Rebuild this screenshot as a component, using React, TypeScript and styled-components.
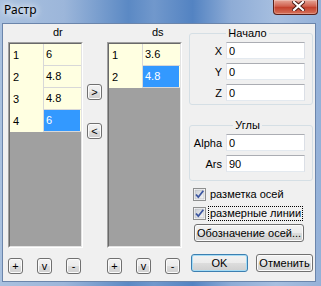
import styled, { createGlobalStyle } from "styled-components";

const GlobalStyle = createGlobalStyle`
  html, body {
    margin: 0;
    padding: 0;
  }
  body {
    width: 321px;
    height: 286px;
    overflow: hidden;
    font-family: "Liberation Sans", Arial, sans-serif;
    font-size: 11px;
    color: #000;
  }
`;

const Window = styled.div`
  width: 321px;
  height: 286px;
  display: flex;
  flex-direction: column;
  background: linear-gradient(
    90deg,
    #a9c1df 0%,
    #9cb6da 20%,
    #5b89c4 40%,
    #7198cc 48%,
    #5383c2 60%,
    #8eacd6 72%,
    #a7bfe0 86%,
    #94b1d8 100%
  );
`;

const TitleBar = styled.div`
  height: 23px;
  flex: none;
  display: flex;
  align-items: flex-start;
  justify-content: space-between;
  padding: 0 3px 0 4px;
`;

const Caption = styled.span`
  font-family: "Noto Sans", "Open Sans", sans-serif;
  font-size: 12px;
  line-height: 16px;
  margin-top: 2px;
  text-shadow: 0 0 6px #fff, 0 0 10px #fff;
`;

const CloseButton = styled.div`
  width: 45px;
  height: 15px;
  box-sizing: border-box;
  border: 1px solid #5b2019;
  border-top: none;
  border-radius: 0 0 4px 4px;
  background: linear-gradient(#e6a698 0%, #d0604e 45%, #c3402c 52%, #d6725a 100%);
  box-shadow: inset 0 0 0 1px rgba(255, 255, 255, 0.25);
  display: flex;
  align-items: flex-start;
  justify-content: center;
  padding: 1px 0 0 5px;
`;

const Frame = styled.div`
  flex: 1;
  display: flex;
  padding: 0 5px 4px 2px;
`;

const Client = styled.div`
  flex: 1;
  display: flex;
  align-items: flex-start;
  background: #f0f0f0;
  border: 1px solid #6b85ab;
  padding-left: 5px;
`;

const GridColumn = styled.div<{ $gap: number }>`
  width: 75px;
  margin-left: ${(p) => p.$gap}px;
  display: flex;
  flex-direction: column;
`;

const GridTitle = styled.div`
  height: 18px;
  box-sizing: border-box;
  padding: 2px 0 0 45px;
  line-height: 13px;
`;

const GridOuter = styled.div`
  height: 206px;
  box-sizing: border-box;
  border: 1px solid;
  border-color: #a0a0a0 #ffffff #ffffff #a0a0a0;
  display: flex;
`;

const GridInner = styled.div`
  flex: 1;
  border: 1px solid;
  border-color: #696969 #e3e3e3 #e3e3e3 #696969;
  background: #a0a0a0;
`;

const Row = styled.div`
  height: 22px;
  display: flex;
`;

const FixedCell = styled.div`
  width: 33px;
  background: #ffffe1;
  padding: 5px 0 0 3px;
  box-sizing: border-box;
  line-height: 13px;
`;

const ValueCell = styled.div<{ $selected?: boolean }>`
  flex: 1;
  background: #ffffe1;
  border-left: 1px solid #d8d8d8;
  border-bottom: 1px solid #d8d8d8;
  box-sizing: border-box;
  display: flex;

  span {
    flex: 1;
    padding: 4px 0 0 2px;
    line-height: 13px;
    background: ${(p) => (p.$selected ? "#3399ff" : "transparent")};
    color: ${(p) => (p.$selected ? "#fff" : "#000")};
    margin: ${(p) => (p.$selected ? "0 1px 0 0" : "0")};
  }
`;

const SmallRow = styled.div`
  display: flex;
  gap: 14px;
  margin-top: 10px;
`;

const Button = styled.button`
  font-family: "Liberation Sans", Arial, sans-serif;
  font-size: 11px;
  color: #000;
  padding: 0;
  box-sizing: border-box;
  border: 1px solid #707070;
  border-radius: 3px;
  background: linear-gradient(#f2f2f2 0%, #ebebeb 50%, #dddddd 50%, #cfcfcf 100%);
  box-shadow: inset 0 0 0 1px #fbfbfb;
  line-height: 12px;
`;

const SmallButton = styled(Button)`
  width: 15px;
  height: 16px;
`;

const ArrowColumn = styled.div`
  width: 15px;
  margin-left: 4px;
  padding-top: 60px;
  display: flex;
  flex-direction: column;
  gap: 23px;
`;

const SideColumn = styled.div`
  width: 124px;
  margin-left: 7px;
  display: flex;
  flex-direction: column;
`;

const Group = styled.fieldset<{ $top: number; $bottom: number }>`
  margin: ${(p) => p.$top}px 0 0 0;
  padding: 2px 7px ${(p) => p.$bottom}px 0;
  min-width: 0;
  border: 1px solid #d5dfe5;
  border-radius: 3px;
  display: flex;
  flex-direction: column;
  gap: 4px;

  legend {
    margin: 0 auto;
    padding: 0 2px;
    line-height: 13px;
  }
`;

const FieldRow = styled.label`
  display: flex;
  align-items: center;
  justify-content: flex-end;
  gap: 4px;
`;

const Input = styled.input`
  width: 79px;
  height: 17px;
  box-sizing: border-box;
  border: 1px solid;
  border-color: #abadb3 #dbdfe6 #e3e9ef #e2e3ea;
  background: #fff;
  font-family: "Liberation Sans", Arial, sans-serif;
  font-size: 11px;
  padding: 0 2px;
  outline: none;
`;

const CheckRow = styled.label<{ $top: number }>`
  height: 18px;
  margin: ${(p) => p.$top}px 0 0 4px;
  display: flex;
  align-items: center;
`;

const CheckText = styled.span<{ $focused?: boolean }>`
  margin-left: 2px;
  padding: 0 1px;
  line-height: 13px;
  white-space: nowrap;
  overflow: hidden;
  border: 1px ${(p) => (p.$focused ? "dotted #000" : "solid transparent")};
  width: ${(p) => (p.$focused ? "91px" : "auto")};
`;

const AxisButton = styled(Button)`
  width: 110px;
  height: 18px;
  margin: 2px 0 0 5px;
`;

const DialogRow = styled.div`
  display: flex;
  gap: 8px;
  margin: 12px 0 0 2px;
`;

const DialogButton = styled(Button)<{ $default?: boolean }>`
  width: 58px;
  height: 18px;
  border-color: ${(p) => (p.$default ? "#3c7fb1" : "#707070")};
  box-shadow: ${(p) =>
    p.$default ? "inset 0 0 0 1px #a6dcf5" : "inset 0 0 0 1px #fbfbfb"};
`;

function CheckBox() {
  return (
    <svg width="13" height="13" viewBox="0 0 13 13">
      <defs>
        <linearGradient id="cbg" x1="0" y1="0" x2="1" y2="1">
          <stop offset="0" stopColor="#cbcfd5" />
          <stop offset="1" stopColor="#f6f6f6" />
        </linearGradient>
      </defs>
      <rect x="0.5" y="0.5" width="12" height="12" fill="#fff" stroke="#8e8f8f" />
      <rect x="2" y="2" width="9" height="9" fill="url(#cbg)" stroke="#b0b3b8" strokeWidth="0.6" />
      <path d="M3 6.5 L5.3 9.2 L10.3 2.8" fill="none" stroke="#3c56a0" strokeWidth="1.8" />
    </svg>
  );
}

interface GridProps {
  title: string;
  values: string[];
  selected: number;
  gap: number;
}

function DataGrid({ title, values, selected, gap }: GridProps) {
  return (
    <GridColumn $gap={gap}>
      <GridTitle>{title}</GridTitle>
      <GridOuter>
        <GridInner>
          {values.map((v, i) => (
            <Row key={i}>
              <FixedCell>{i + 1}</FixedCell>
              <ValueCell $selected={i === selected}>
                <span>{v}</span>
              </ValueCell>
            </Row>
          ))}
        </GridInner>
      </GridOuter>
      <SmallRow>
        <SmallButton>+</SmallButton>
        <SmallButton>v</SmallButton>
        <SmallButton>-</SmallButton>
      </SmallRow>
    </GridColumn>
  );
}

export default function App() {
  return (
    <>
      <GlobalStyle />
      <Window>
        <TitleBar>
          <Caption>Растр</Caption>
          <CloseButton>
            <svg width="13" height="10" viewBox="0 0 13 10">
              <path d="M2 1 L11 9 M11 1 L2 9" stroke="#4a1a14" strokeWidth="4" strokeLinecap="square" />
              <path d="M2 1 L11 9 M11 1 L2 9" stroke="#fff" strokeWidth="2.2" strokeLinecap="square" />
            </svg>
          </CloseButton>
        </TitleBar>
        <Frame>
          <Client>
            <DataGrid title="dr" values={["6", "4.8", "4.8", "6"]} selected={3} gap={0} />
            <ArrowColumn>
              <SmallButton>&gt;</SmallButton>
              <SmallButton>&lt;</SmallButton>
            </ArrowColumn>
            <DataGrid title="ds" values={["3.6", "4.8"]} selected={1} gap={5} />
            <SideColumn>
              <Group $top={3} $bottom={3}>
                <legend>Начало</legend>
                <FieldRow>
                  X <Input defaultValue="0" />
                </FieldRow>
                <FieldRow>
                  Y <Input defaultValue="0" />
                </FieldRow>
                <FieldRow>
                  Z <Input defaultValue="0" />
                </FieldRow>
              </Group>
              <Group $top={14} $bottom={8}>
                <legend>Углы</legend>
                <FieldRow>
                  Alpha <Input defaultValue="0" />
                </FieldRow>
                <FieldRow>
                  Ars <Input defaultValue="90" />
                </FieldRow>
              </Group>
              <CheckRow $top={4}>
                <CheckBox />
                <CheckText>разметка осей</CheckText>
              </CheckRow>
              <CheckRow $top={1}>
                <CheckBox />
                <CheckText $focused>размерные линии</CheckText>
              </CheckRow>
              <AxisButton>Обозначение осей...</AxisButton>
              <DialogRow>
                <DialogButton $default>OK</DialogButton>
                <DialogButton>Отменить</DialogButton>
              </DialogRow>
            </SideColumn>
          </Client>
        </Frame>
      </Window>
    </>
  );
}
